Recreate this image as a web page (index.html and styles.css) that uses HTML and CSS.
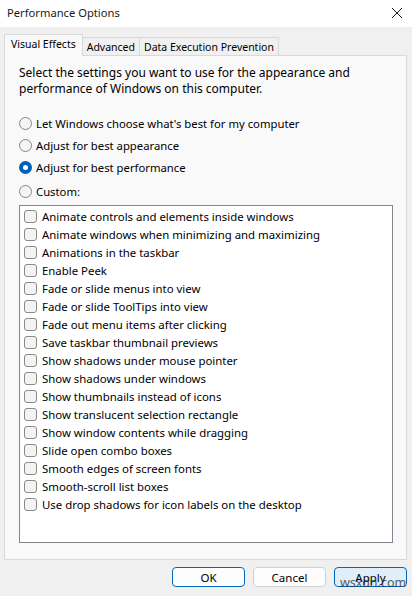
FILE: index.html
```html
<!DOCTYPE html>
<html lang="en">
<head>
<meta charset="utf-8">
<title>Performance Options</title>
<link rel="stylesheet" href="styles.css">
</head>
<body>
<div class="window">
  <div class="titlebar">
    <span class="title">Performance Options</span>
    <svg class="close" width="12" height="12" viewBox="0 0 12 12"><path d="M1 1 L11 11 M11 1 L1 11" stroke="#1a1a1a" stroke-width="1" fill="none"/></svg>
  </div>
  <div class="content">
    <div class="tabs">
      <div class="tab active">Visual Effects</div>
      <div class="tab">Advanced</div>
      <div class="tab">Data Execution Prevention</div>
    </div>
    <div class="panel">
      <p class="intro">Select the settings you want to use for the appearance and<br>performance of Windows on this computer.</p>
      <div class="radios">
        <div class="radio"><span class="dot"></span>Let Windows choose what's best for my computer</div>
        <div class="radio"><span class="dot"></span>Adjust for best appearance</div>
        <div class="radio"><span class="dot on"></span>Adjust for best performance</div>
        <div class="radio last"><span class="dot"></span>Custom:</div>
      </div>
      <div class="list">
        <div class="item"><span class="box"></span>Animate controls and elements inside windows</div>
        <div class="item"><span class="box"></span>Animate windows when minimizing and maximizing</div>
        <div class="item"><span class="box"></span>Animations in the taskbar</div>
        <div class="item"><span class="box"></span>Enable Peek</div>
        <div class="item"><span class="box"></span>Fade or slide menus into view</div>
        <div class="item"><span class="box"></span>Fade or slide ToolTips into view</div>
        <div class="item"><span class="box"></span>Fade out menu items after clicking</div>
        <div class="item"><span class="box"></span>Save taskbar thumbnail previews</div>
        <div class="item"><span class="box"></span>Show shadows under mouse pointer</div>
        <div class="item"><span class="box"></span>Show shadows under windows</div>
        <div class="item"><span class="box"></span>Show thumbnails instead of icons</div>
        <div class="item"><span class="box"></span>Show translucent selection rectangle</div>
        <div class="item"><span class="box"></span>Show window contents while dragging</div>
        <div class="item"><span class="box"></span>Slide open combo boxes</div>
        <div class="item"><span class="box"></span>Smooth edges of screen fonts</div>
        <div class="item"><span class="box"></span>Smooth-scroll list boxes</div>
        <div class="item"><span class="box"></span>Use drop shadows for icon labels on the desktop</div>
      </div>
    </div>
    <div class="buttons">
      <button class="btn default">OK</button>
      <button class="btn">Cancel</button>
      <button class="btn hover">Apply<span class="watermark">wsxdn.com</span></button>
    </div>
  </div>
</div>
</body>
</html>
```
FILE: styles.css
```css
* { box-sizing: border-box; }
html, body { margin: 0; padding: 0; }
body {
  width: 412px;
  height: 596px;
  background: #f0f0f0;
  font-family: "Noto Sans", "Open Sans", sans-serif;
  font-size: 12px;
  color: #000;
  overflow: hidden;
}
.window { width: 412px; height: 596px; display: flex; flex-direction: column; }
.titlebar {
  height: 27px;
  background: #ffffff;
  display: flex;
  align-items: center;
  justify-content: space-between;
  padding: 0 9px 2px 7px;
}
.title { font-size: 11.2px; color: #1a1a1a; }
.close { display: block; }
.content { padding: 6px 5px 0 4px; display: flex; flex-direction: column; }
.tabs { display: flex; align-items: flex-end; height: 22px; font-size: 10.5px; }
.tab {
  height: 18px;
  padding: 0 4px;
  border: 1px solid #d9d9d9;
  border-bottom: none;
  border-left: none;
  background: #f0f0f0;
  line-height: 18px;
  color: #000;
}
.tab.active {
  height: 22px;
  background: #f9f9f9;
  border-left: 1px solid #d9d9d9;
  padding: 0 6px;
  line-height: 19px;
  margin-bottom: -1px;
  position: relative;
  z-index: 1;
}
.panel {
  height: 505px;
  background: #f9f9f9;
  border: 1px solid #d9d9d9;
  padding: 9px 13px 0 14px;
}
.intro { margin: 0; line-height: 16px; }
.radios { margin-top: 15px; display: flex; flex-direction: column; font-size: 11.3px; }
.radio { height: 22px; display: flex; align-items: center; }
.radio.last { height: 23px; margin-top: 2px; }
.dot {
  width: 13px; height: 13px;
  border-radius: 50%;
  border: 1px solid #858585;
  background: #f5f5f5;
  margin: 0 4px 0 0;
  flex: none;
}
.dot.on {
  border: 4px solid #005fb8;
  background: #ffffff;
}
.list {
  margin-top: 2px;
  height: 338px;
  background: #ffffff;
  border: 1px solid #828790;
  padding-top: 1px;
  font-size: 11.4px;
}
.item { height: 18px; display: flex; align-items: center; }
.box {
  width: 13px; height: 13px;
  border: 1px solid #8a8a8a;
  border-radius: 3px;
  background: #f3f3f3;
  margin: 0 5px 0 4px;
  flex: none;
}
.buttons { display: flex; justify-content: flex-end; gap: 8px; padding-top: 7px; }
.btn {
  width: 73px; height: 20px;
  font-family: inherit;
  font-size: 11.5px;
  background: #fdfdfd;
  border: 1px solid #d0d0d0;
  border-radius: 4px;
  padding: 0;
  color: #000;
  position: relative;
}
.btn.default { border-color: #0067c0; }
.btn.hover { background: #e0eef9; border-color: #0067c0; }
.watermark {
  position: absolute;
  left: 5px;
  top: 6px;
  font-size: 12.5px;
  color: #2a2a2a;
  opacity: 0.75;
  white-space: nowrap;
}
```
